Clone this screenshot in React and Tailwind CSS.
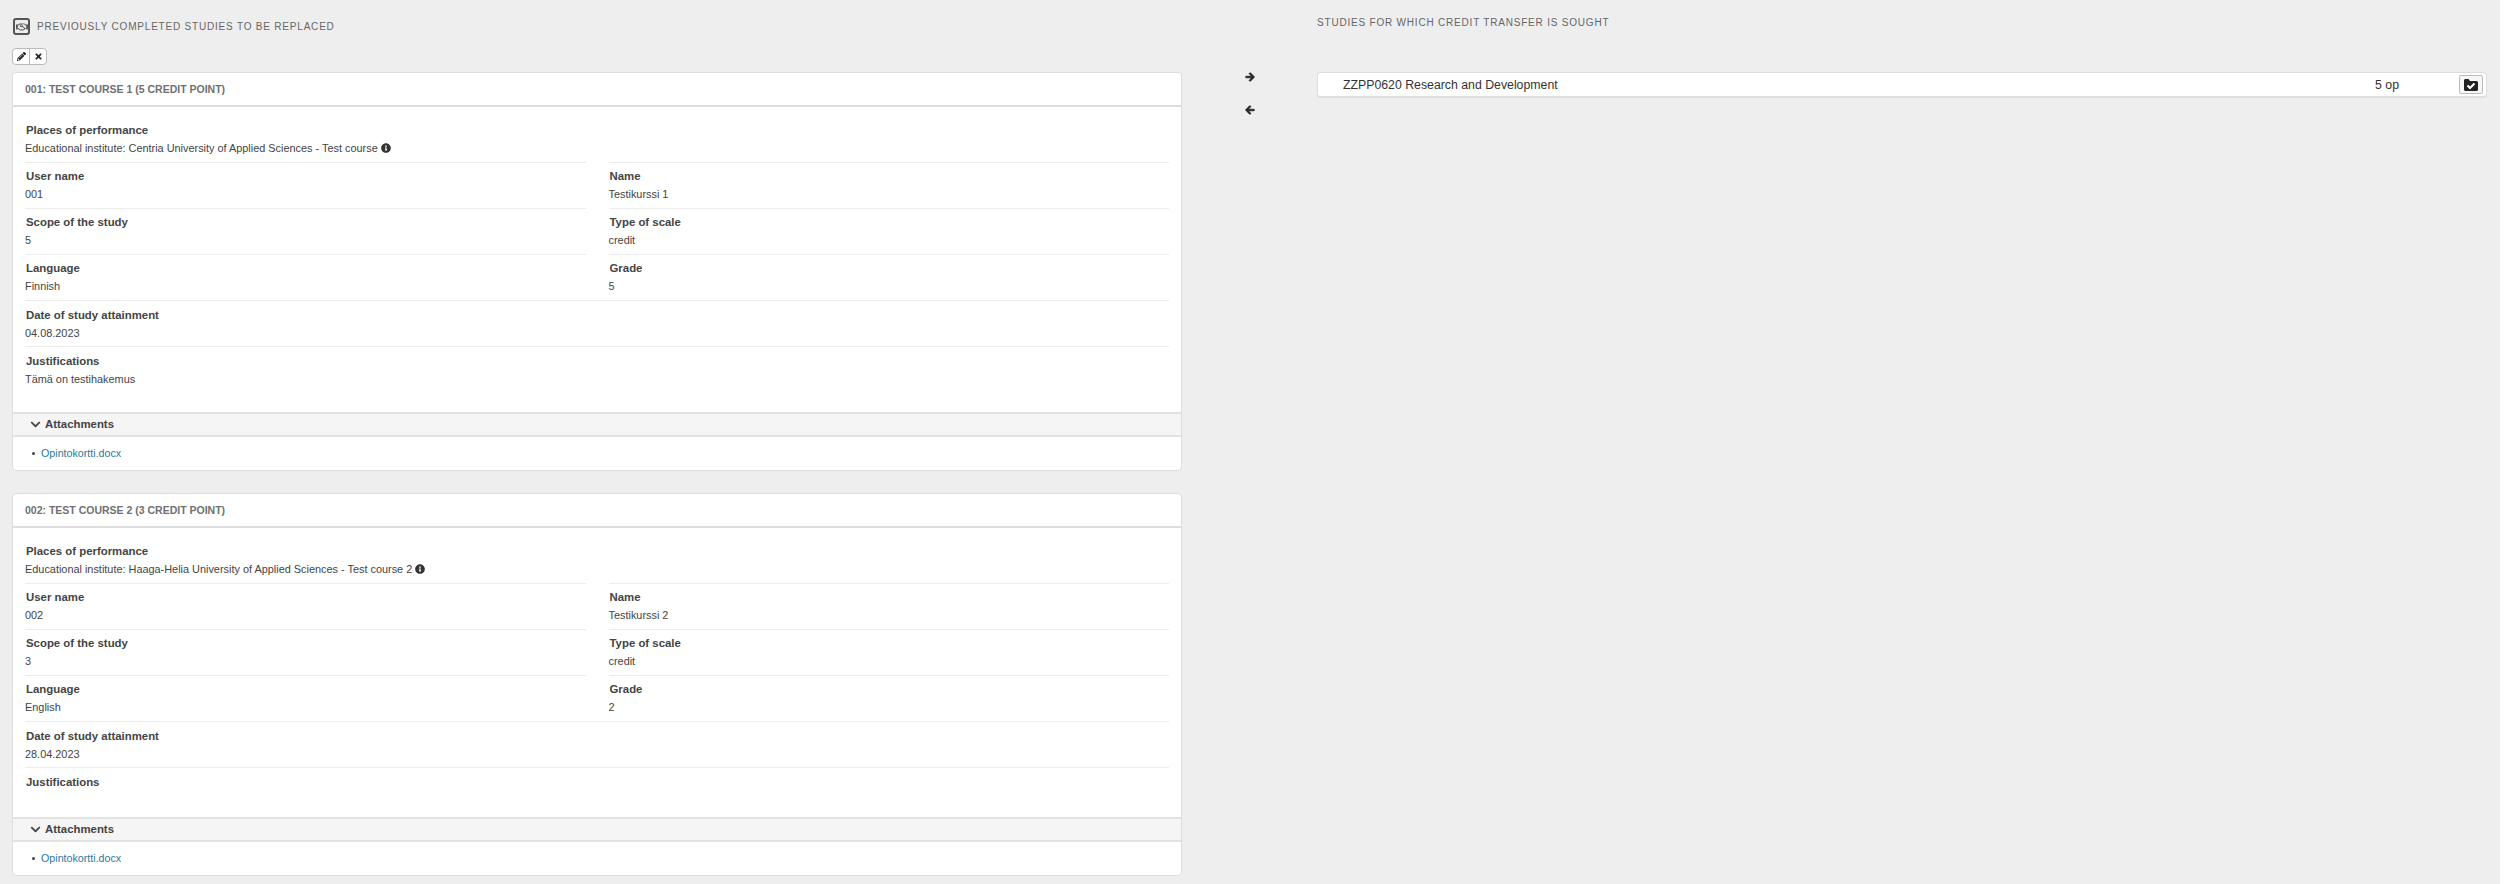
import React from "react";
import {
  FaArrowLeft,
  FaArrowRight,
  FaChevronDown,
  FaInfoCircle,
  FaPencilAlt,
  FaRegHandshake,
  FaTimes,
} from "react-icons/fa";

const courses = [
  {
    title: "001: Test course 1 (5 credit point)",
    place: "Educational institute: Centria University of Applied Sciences - Test course",
    userName: "001",
    name: "Testikurssi 1",
    scope: "5",
    language: "Finnish",
    grade: "5",
    date: "04.08.2023",
    justification: "Tämä on testihakemus",
  },
  {
    title: "002: Test course 2 (3 credit point)",
    place: "Educational institute: Haaga-Helia University of Applied Sciences - Test course 2",
    userName: "002",
    name: "Testikurssi 2",
    scope: "3",
    language: "English",
    grade: "2",
    date: "28.04.2023",
    justification: "",
  },
];

const Field = ({ label, value, wide }) => (
  <div
    className={
      wide
        ? "col-span-2 border-t border-[#ececec] pt-[5px] pb-[4px]"
        : "border-t border-[#ececec] pt-[4px] pb-[5px]"
    }
  >
    <div className="h-[18px] pl-px text-[11.4px] leading-[18px] font-bold text-[#444]">{label}</div>
    {value && <div className="h-[18px] text-[10.9px] leading-[18px] text-[#444]">{value}</div>}
  </div>
);

const CourseCard = ({ course }) => (
  <div className="rounded-[4px] border border-[#ddd] bg-white">
    <div className="h-[34px] border-b-2 border-[#ddd] pl-3 text-[10.5px] leading-[32px] font-bold text-[#707070] uppercase">
      {course.title}
    </div>
    <div className="px-3 pt-[14px]">
      <div className="grid grid-cols-2 gap-x-[23px]">
        <div className="col-span-2 pb-[5px]">
          <div className="h-[18px] pl-px text-[11.4px] leading-[18px] font-bold text-[#444]">
            Places of performance
          </div>
          <div className="flex h-[18px] items-center gap-[3px] text-[10.9px] leading-[18px] text-[#444]">
            {course.place}
            <FaInfoCircle className="size-[10px] text-[#333]" />
          </div>
        </div>
        <Field label="User name" value={course.userName} />
        <Field label="Name" value={course.name} />
        <Field label="Scope of the study" value={course.scope} />
        <Field label="Type of scale" value="credit" />
        <Field label="Language" value={course.language} />
        <Field label="Grade" value={course.grade} />
        <Field wide label="Date of study attainment" value={course.date} />
        <Field wide label="Justifications" value={course.justification} />
      </div>
      <div className={course.justification ? "h-[20px]" : "h-[22px]"} />
    </div>
    <div className="flex h-[25px] items-center border-y-2 border-[#e2e2e2] bg-[#f5f5f5] pl-[17px] text-[11.4px] font-bold text-[#444]">
      <FaChevronDown className="mr-[4px] size-[11px]" />
      Attachments
    </div>
    <ul className="flex h-[33px] items-center pl-[19px] text-[10.7px] text-[#2b7a9b]">
      <li className="flex items-center gap-[6px]">
        <span className="size-[3px] rounded-full bg-[#444]" />
        Opintokortti.docx
      </li>
    </ul>
  </div>
);

export default function App() {
  return (
    <div className="flex min-h-[884px] w-full bg-white font-['Liberation_Sans',Arial,sans-serif]">
      <div className="flex w-[2500px] bg-[#eeeeee] pl-3">
        <div className="w-[1170px] pt-[18px]">
          <div className="flex h-[17px] items-center gap-[7px] pl-px text-[10px] tracking-[0.8px] text-[#666] uppercase">
            <span className="flex size-[17px] items-center justify-center rounded-[3px] border-2 border-[#555] text-[#555]">
              <FaRegHandshake className="size-[12px]" />
            </span>
            Previously completed studies to be replaced
          </div>
          <div className="mt-[13px] flex h-[17px] w-[35px] rounded-[4px] border border-[#bbb] bg-white text-[#222]">
            <span className="flex flex-1 items-center justify-center border-r border-[#bbb]">
              <FaPencilAlt className="size-[9px]" />
            </span>
            <span className="flex flex-1 items-center justify-center">
              <FaTimes className="size-[9px]" />
            </span>
          </div>
          <div className="mt-[7px] flex flex-col gap-[22px]">
            {courses.map((course) => (
              <CourseCard key={course.userName} course={course} />
            ))}
          </div>
        </div>

        <div className="flex w-[135px] flex-col items-center gap-[23px] pt-[72px] text-[#222]">
          <FaArrowRight className="size-[10px] stroke-[40px]" />
          <FaArrowLeft className="size-[10px] stroke-[40px]" />
        </div>

        <div className="w-[1170px] pt-[16px]">
          <div className="h-[14px] text-[10px] leading-[14px] tracking-[0.8px] text-[#666] uppercase">
            Studies for which credit transfer is sought
          </div>
          <div className="mt-[42px] flex h-[26px] items-center rounded-[4px] border-x border-t border-b-2 border-[#ddd] bg-white pr-[3px] pl-[25px] text-[12.3px] text-[#333]">
            <span className="flex-1 pt-px">ZZPP0620 Research and Development</span>
            <span className="mr-[60px] pt-px">5 op</span>
            <span className="flex h-[19px] w-[24px] items-center justify-center rounded-[2px] border border-[#bbb] bg-[#f7f7f7]">
              <svg viewBox="0 0 14 12" className="h-[12px] w-[14px]">
                <path d="M0 1.5C0 .7.7 0 1.5 0h3L6 2h6.5c.8 0 1.5.7 1.5 1.5v7c0 .8-.7 1.5-1.5 1.5h-11C.7 12 0 11.3 0 10.5z" fill="#222" />
                <path d="M3.5 6.5 6 9l4.5-4.5" fill="none" stroke="#fff" strokeWidth="2" />
              </svg>
            </span>
          </div>
        </div>
      </div>
    </div>
  );
}
